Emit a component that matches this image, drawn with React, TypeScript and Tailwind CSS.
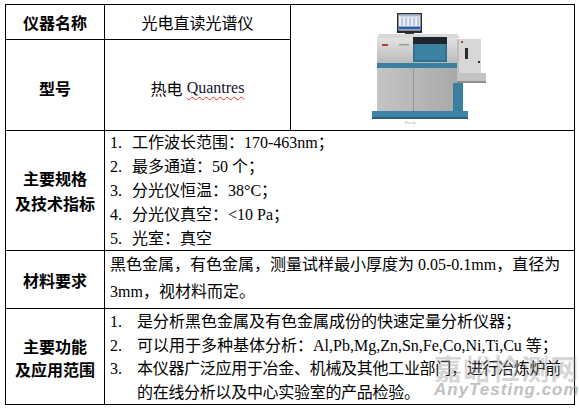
const sans = "font-['Noto_Sans_CJK_SC',sans-serif]";
const body = "font-['Liberation_Serif','Noto_Sans_CJK_SC',serif]";

const specs = [
  "工作波长范围：170-463nm；",
  "最多通道：50 个；",
  "分光仪恒温：38°C；",
  "分光仪真空：<10 Pa；",
  "光室：真空",
];

function Label({ lines, leading }: { lines: string[]; leading: string }) {
  return (
    <div className={`flex items-center justify-center bg-white text-[16px] font-bold text-black ${sans} ${leading}`}>
      <div className="text-center">
        {lines.map((l) => (
          <div key={l}>{l}</div>
        ))}
      </div>
    </div>
  );
}

function Spectrometer() {
  return (
    <svg width="114" height="112" viewBox="0 0 114 112" className="mt-[2px] -ml-[8px]">
      <defs>
        <linearGradient id="front" x1="0" y1="0" x2="0" y2="1">
          <stop offset="0" stopColor="#e2e2e2" />
          <stop offset="1" stopColor="#b9b9b9" />
        </linearGradient>
        <linearGradient id="lower" x1="0" y1="0" x2="1" y2="0">
          <stop offset="0" stopColor="#c4c4c4" />
          <stop offset="1" stopColor="#a9a9a9" />
        </linearGradient>
      </defs>
      {/* monitor */}
      <rect x="25" y="0" width="25" height="20" fill="#2b2b2b" />
      <rect x="26.5" y="1.5" width="22" height="16" fill="#eef2f6" />
      <rect x="26.5" y="1.5" width="22" height="2" fill="#9fb6cf" />
      {[29, 33, 37, 41, 45].map((x) => (
        <rect key={x} x={x} y="4.5" width="2.2" height="8" fill="#b7c9dd" />
      ))}
      <rect x="26.5" y="13.5" width="22" height="3" fill="#2f5fae" />
      <rect x="33" y="20" width="9" height="3" fill="#3a3a3a" />
      <rect x="29" y="22" width="17" height="1.5" fill="#222" />
      {/* top face */}
      <polygon points="7,21 85,21 88,25 5,25" fill="#d9d9d9" />
      {/* upper front */}
      <rect x="5" y="25" width="80" height="26" fill="url(#front)" />
      <rect x="10" y="31" width="6" height="2" fill="#c0392b" />
      <rect x="27" y="31" width="10" height="1.5" fill="#9a9a9a" />
      {/* teal panel */}
      <rect x="41" y="24" width="34" height="25" fill="#2f6f8f" />
      <rect x="41" y="24" width="34" height="7" fill="#1e262d" />
      <rect x="43" y="31" width="30" height="16" fill="#3b82a3" />
      {/* stripe */}
      <rect x="5" y="50" width="80" height="5" fill="#3a7ea0" />
      {/* lower body */}
      <rect x="5" y="55" width="80" height="44" fill="url(#lower)" />
      <rect x="41" y="55" width="0.8" height="44" fill="#8e8e8e" />
      {/* right unit */}
      <rect x="85" y="26" width="24" height="36" fill="#d7d7d7" />
      <rect x="85" y="26" width="2" height="36" fill="#bdbdbd" />
      <rect x="89" y="28" width="2" height="2" fill="#c0392b" />
      <rect x="93" y="35" width="3" height="11" fill="#2b2b2b" />
      <rect x="106" y="48" width="2" height="2" fill="#333" />
      <rect x="85" y="60" width="29" height="10" fill="#c3c3c3" />
      <rect x="85" y="68" width="29" height="2" fill="#8f8f8f" />
      <rect x="81" y="70" width="10" height="36" fill="#3a7ea0" />
      {/* base */}
      <rect x="0" y="98" width="96" height="7" fill="#3f84a8" />
      <rect x="0" y="104" width="96" height="2" fill="#2c5f7a" />
      <text x="33" y="111" fontSize="4" fill="#b5b5b5" fontFamily="Liberation Sans, sans-serif">
        Bai du
      </text>
    </svg>
  );
}

export default function App() {
  return (
    <div className="relative h-[409px] w-[579px] overflow-hidden bg-white">
      <div className="ml-[5px] mt-[4px] grid w-[570px] grid-cols-[98px_185px_283px] grid-rows-[34px_90px_119px_57px_95px] gap-px bg-black p-px">
        <Label lines={["仪器名称"]} leading="leading-[22px]" />
        <div className={`flex items-center justify-center bg-white text-[16px] text-black ${sans}`}>
          光电直读光谱仪
        </div>
        <div className="row-span-2 flex items-center justify-center bg-white">
          <Spectrometer />
        </div>

        <Label lines={["型号"]} leading="leading-[22px] pt-[5px]" />
        <div className={`flex items-center justify-center bg-white pt-[5px] text-[16px] text-black`}>
          <span className={sans}>热电</span>
          <span className={`ml-[4px] text-[#111133] underline decoration-[#e03030] decoration-wavy decoration-1 underline-offset-[3px] ${body}`}>
            Quantres
          </span>
        </div>

        <Label lines={["主要规格", "及技术指标"]} leading="leading-[25px]" />
        <div className={`col-span-2 bg-white pl-[5px] text-[16px] leading-[24px] text-black ${body}`}>
          {specs.map((s, i) => (
            <div key={s} className="flex">
              <span className="w-[22px] shrink-0">{i + 1}.</span>
              <span>{s}</span>
            </div>
          ))}
        </div>

        <Label lines={["材料要求"]} leading="leading-[22px]" />
        <div className={`col-span-2 bg-white pl-[5px] text-[16px] leading-[27px] text-black ${body}`}>
          <div>黑色金属，有色金属，测量试样最小厚度为 0.05-0.1mm，直径为</div>
          <div>3mm，视材料而定。</div>
        </div>

        <Label lines={["主要功能", "及应用范围"]} leading="leading-[23px] pt-[2px]" />
        <div className={`col-span-2 bg-white pl-[5px] pt-[1px] text-[16px] leading-[23.5px] text-black ${body}`}>
          <div className="flex">
            <span className="w-[27px] shrink-0">1.</span>
            <span>是分析黑色金属及有色金属成份的快速定量分析仪器；</span>
          </div>
          <div className="flex">
            <span className="w-[27px] shrink-0">2.</span>
            <span>可以用于多种基体分析：Al,Pb,Mg,Zn,Sn,Fe,Co,Ni,Ti,Cu 等；</span>
          </div>
          <div className="flex">
            <span className="w-[27px] shrink-0">3.</span>
            <span className="tracking-[-0.3px]">
              本仪器广泛应用于冶金、机械及其他工业部门，进行冶炼炉前
              <br />
              的在线分析以及中心实验室的产品检验。
            </span>
          </div>
        </div>
      </div>

      {/* watermark */}
      <div className="pointer-events-none absolute left-[434px] top-[352px] flex flex-col items-center">
        <div className={`text-[28px] font-bold leading-[32px] tracking-[1px] text-[#9a9a9a] opacity-40 ${sans}`}>
          嘉峪检测网
        </div>
        <div className="-mt-[3px] font-['Liberation_Sans',sans-serif] text-[17px] font-bold italic leading-[18px] tracking-[1px] text-[#a8a8a8] opacity-70">
          AnyTesting.com
        </div>
      </div>
    </div>
  );
}
